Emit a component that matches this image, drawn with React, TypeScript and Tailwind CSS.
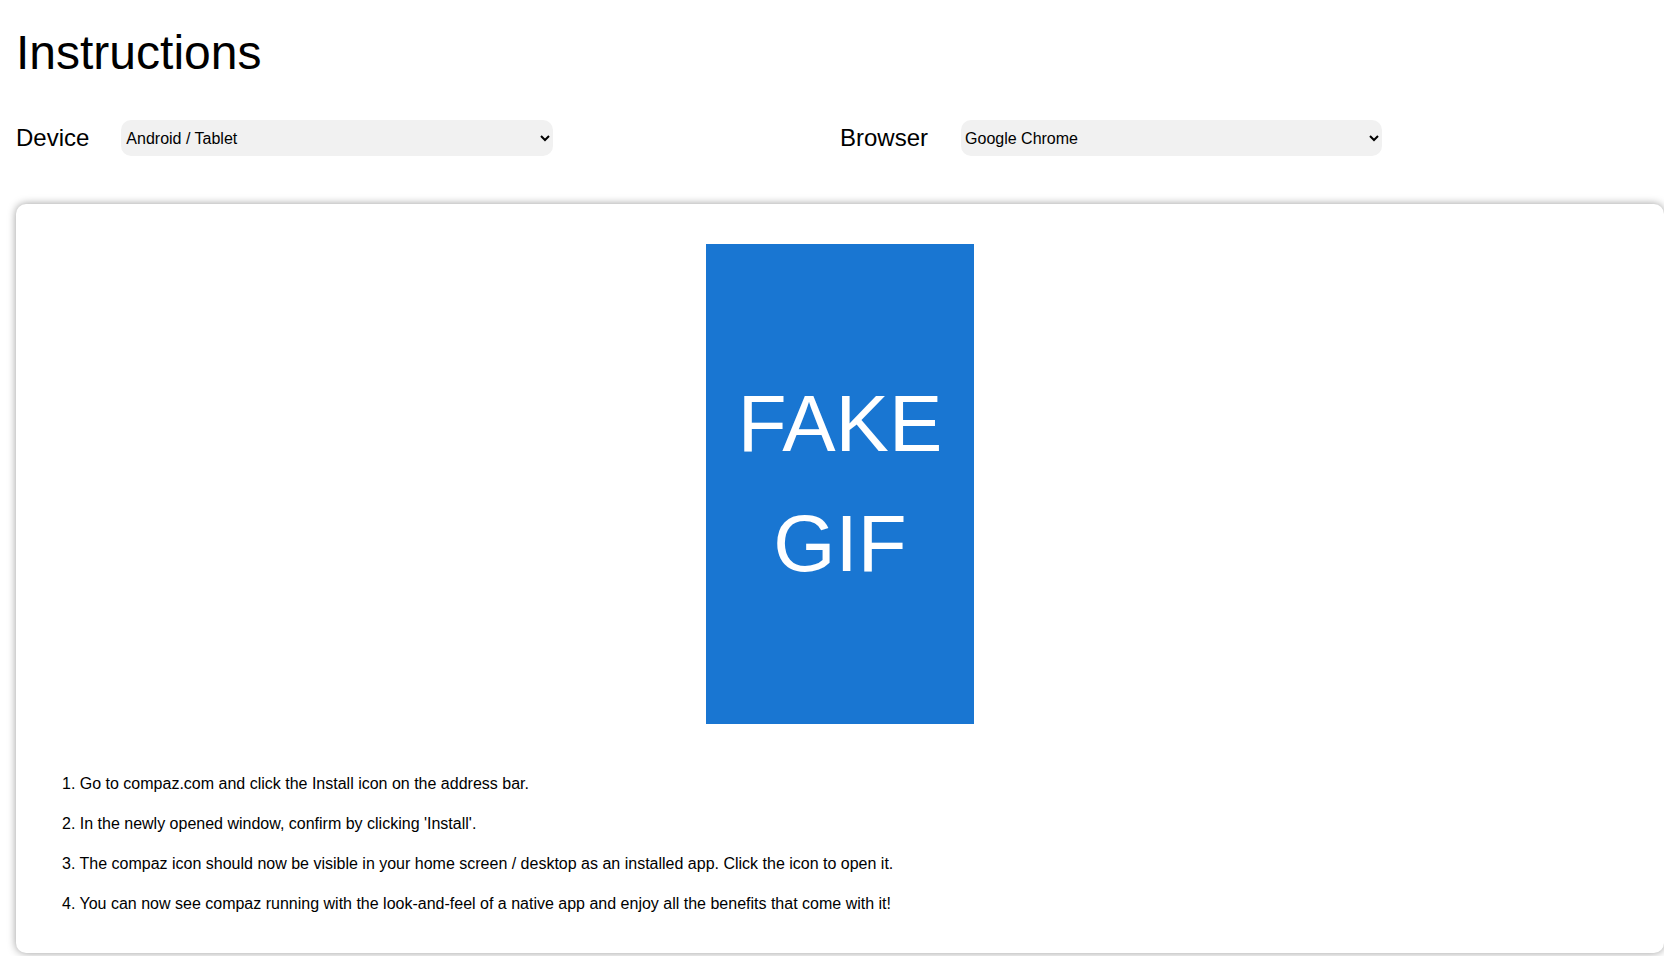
import React from "react";

export default function App() {
  const steps = [
    "1. Go to compaz.com and click the Install icon on the address bar.",
    "2. In the newly opened window, confirm by clicking 'Install'.",
    "3. The compaz icon should now be visible in your home screen / desktop as an installed app. Click the icon to open it.",
    "4. You can now see compaz running with the look-and-feel of a native app and enjoy all the benefits that come with it!",
  ];
  return (
    <div
      className="min-h-[956px] bg-white pl-4 pt-[25px] text-black"
      style={{ fontFamily: "'Liberation Sans', Arial, sans-serif" }}
    >
      <h1 className="text-[48px] leading-[56px] font-normal">Instructions</h1>
      <div className="mt-[39px] flex items-center">
        <div className="flex w-[824px] items-center">
          <label className="mr-8 text-[24px] leading-[28px]">Device</label>
          <select
            defaultValue="android"
            className="h-9 w-[432px] rounded-[10px] bg-[#f1f1f1] pl-px text-[16px] text-black outline-none"
          >
            <option value="android">Android / Tablet</option>
            <option value="ios">iPhone / iPad</option>
            <option value="desktop">Desktop</option>
          </select>
        </div>
        <div className="flex items-center">
          <label className="mr-[33px] text-[24px] leading-[28px]">Browser</label>
          <select
            defaultValue="chrome"
            className="h-9 w-[421px] rounded-[10px] bg-[#f1f1f1] text-[16px] text-black outline-none"
          >
            <option value="chrome">Google Chrome</option>
            <option value="firefox">Mozilla Firefox</option>
            <option value="safari">Safari</option>
          </select>
        </div>
      </div>
      <div className="mt-12 rounded-[10px] bg-white pt-10 pb-[37px] shadow-[0_0_9px_rgba(0,0,0,0.4)]">
        <div className="flex justify-center">
          <div className="flex h-[480px] w-[268px] flex-col items-center justify-center bg-[#1976d2] text-center text-[80px] leading-[120px] text-white">
            <span>FAKE</span>
            <span>GIF</span>
          </div>
        </div>
        <div className="mt-[48px] flex flex-col gap-4 pl-[46px]">
          {steps.map((s) => (
            <p key={s} className="text-[16px] leading-6">
              {s}
            </p>
          ))}
        </div>
      </div>
    </div>
  );
}
